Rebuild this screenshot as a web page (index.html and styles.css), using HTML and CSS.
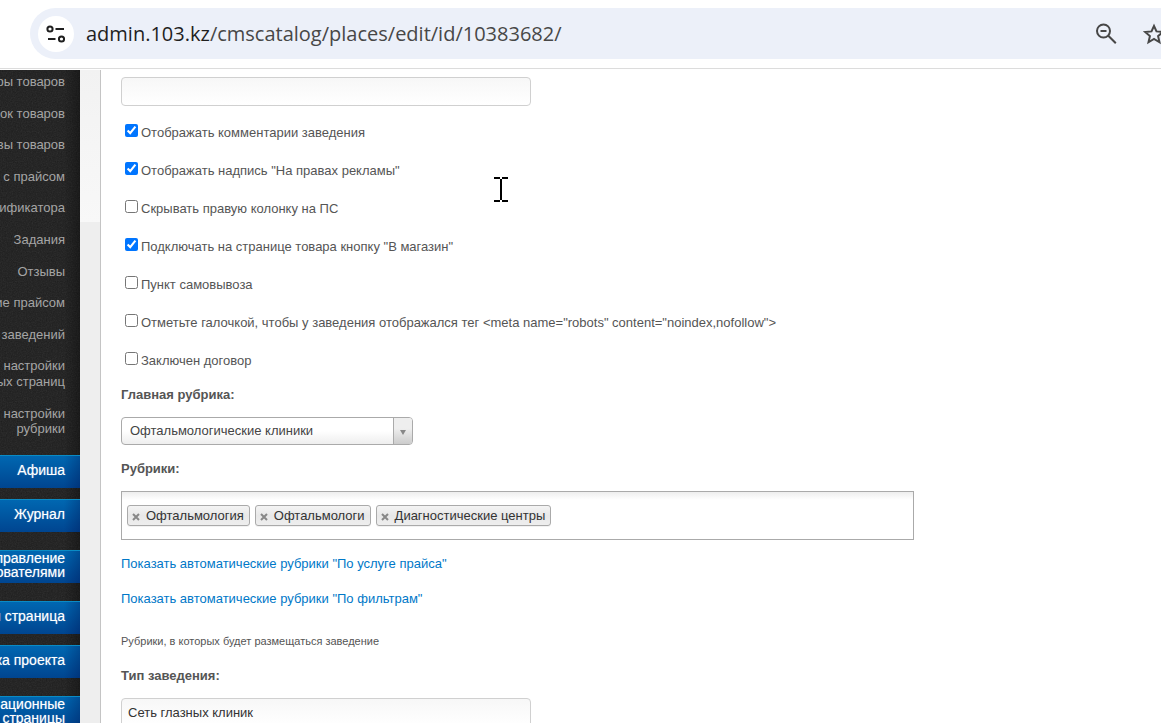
FILE: index.html
```html
<!DOCTYPE html>
<html lang="ru">
<head>
    <meta charset="UTF-8">
    <meta name="viewport" content="width=device-width, initial-scale=1.0">
    <title>Редактирование заведения</title>
    <link rel="stylesheet" href="styles.css">
</head>
<body>

    <header class="toolbar">
        <div class="address-bar">
            <button type="button" class="site-info" aria-label="Сведения о сайте">
                <svg width="20" height="20" viewBox="0 0 20 20" fill="none" stroke="#1f1f1f" stroke-width="2">
                    <circle cx="4" cy="5" r="2.6"/>
                    <path d="M9.5 5H18M2 15H9.5"/>
                    <circle cx="15.5" cy="15" r="2.6"/>
                </svg>
            </button>
            <div class="url"><span class="host">admin.103.kz</span>/cmscatalog/places/edit/id/10383682/</div>
            <button type="button" class="bar-icon" aria-label="Масштаб">
                <svg width="24" height="24" viewBox="0 0 24 24" fill="none" stroke="#474747" stroke-width="2">
                    <circle cx="9.5" cy="9" r="6.5"/>
                    <path d="M14.3 13.8L21.8 21.3M6.5 9H12.5"/>
                </svg>
            </button>
            <button type="button" class="bar-icon" aria-label="Добавить в закладки">
                <svg width="24" height="24" viewBox="0 0 24 24" fill="none" stroke="#474747" stroke-width="2">
                    <path d="M12 4L14.500 9.400L20.800 10L16.100 14.100L17.500 20.300L12 17L6.500 20.300L7.900 14.100L3.200 10L9.500 9.400Z"/>
                </svg>
            </button>
        </div>
    </header>

    <div class="page">
        <aside class="sidebar">
            <ul class="submenu">
                <li><a href="#">ры товаров</a></li>
                <li><a href="#">ок товаров</a></li>
                <li><a href="#">вы товаров</a></li>
                <li><a href="#">с прайсом</a></li>
                <li><a href="#">ификатора</a></li>
                <li><a href="#">Задания</a></li>
                <li><a href="#">Отзывы</a></li>
                <li><a href="#">ие прайсом</a></li>
                <li><a href="#">заведений</a></li>
                <li><a href="#">настройки<br>ых страниц</a></li>
                <li><a href="#">настройки<br>рубрики</a></li>
            </ul>
            <ul class="menu">
                <li><a href="#">Афиша</a></li>
                <li><a href="#">Журнал</a></li>
                <li class="double"><a href="#">правление<br>ователями</a></li>
                <li><a href="#">я страница</a></li>
                <li><a href="#">ка проекта</a></li>
                <li class="double"><a href="#">ационные<br>страницы</a></li>
            </ul>
        </aside>

        <main class="content">
            <form class="place-form">
                <input type="text" class="text-input" aria-label="Значение">

                <div class="checks">
                    <label><input type="checkbox" checked>Отображать комментарии заведения</label>
                    <label><input type="checkbox" checked>Отображать надпись "На правах рекламы"</label>
                    <label><input type="checkbox">Скрывать правую колонку на ПС</label>
                    <label><input type="checkbox" checked>Подключать на странице товара кнопку "В магазин"</label>
                    <label><input type="checkbox">Пункт самовывоза</label>
                    <label><input type="checkbox">Отметьте галочкой, чтобы у заведения отображался тег &lt;meta name="robots" content="noindex,nofollow"&gt;</label>
                    <label><input type="checkbox">Заключен договор</label>
                </div>

                <label class="field-label" for="main-rubric">Главная рубрика:</label>
                <div class="select-wrap">
                    <select id="main-rubric" class="select">
                        <option>Офтальмологические клиники</option>
                    </select>
                    <span class="select-arrow"></span>
                </div>

                <div class="field-label" id="rubrics-label">Рубрики:</div>
                <ul class="tags" aria-labelledby="rubrics-label">
                    <li class="tag"><button type="button" aria-label="Удалить"><svg width="8" height="8" viewBox="0 0 8 8"><path d="M1 1L7 7M7 1L1 7"/></svg></button>Офтальмология</li>
                    <li class="tag"><button type="button" aria-label="Удалить"><svg width="8" height="8" viewBox="0 0 8 8"><path d="M1 1L7 7M7 1L1 7"/></svg></button>Офтальмологи</li>
                    <li class="tag"><button type="button" aria-label="Удалить"><svg width="8" height="8" viewBox="0 0 8 8"><path d="M1 1L7 7M7 1L1 7"/></svg></button>Диагностические центры</li>
                </ul>

                <a class="toggle-link" href="#">Показать автоматические рубрики "По услуге прайса"</a>
                <a class="toggle-link" href="#">Показать автоматические рубрики "По фильтрам"</a>
                <p class="hint">Рубрики, в которых будет размещаться заведение</p>

                <label class="field-label" for="place-type">Тип заведения:</label>
                <input type="text" id="place-type" class="text-input" value="Сеть глазных клиник">
            </form>
        </main>
    </div>

    <svg class="cursor" width="14" height="25" viewBox="0 0 14 25" fill="none" stroke="#000" stroke-width="2">
        <path d="M0 1H6M8 1H14M7 2V23M0 24H6M8 24H14"/>
    </svg>

</body>
</html>
```
FILE: styles.css
```css
* {
    box-sizing: border-box;
}

body {
    margin: 0;
    height: 100vh;
    display: flex;
    flex-direction: column;
    overflow: hidden;
    background: #fff;
    color: #555;
    font-family: "Liberation Sans", Arial, sans-serif;
    font-size: 13px;
    line-height: 16px;
}

ul {
    list-style: none;
    margin: 0;
    padding: 0;
}

a {
    text-decoration: none;
}

button {
    padding: 0;
    border: none;
    background: none;
}

/* browser bar */
.toolbar {
    flex: none;
    padding: 8px 0 9px 30px;
    border-bottom: 1px solid #dcdcdc;
    margin-bottom: 1px;
}

.address-bar {
    display: flex;
    align-items: center;
    height: 51px;
    padding-left: 8px;
    background: #ecf0f9;
    border-radius: 26px 0 0 26px;
    overflow: hidden;
}

.site-info {
    display: flex;
    align-items: center;
    justify-content: center;
    flex: none;
    width: 36px;
    height: 36px;
    border-radius: 50%;
    background: #fff;
}

.url {
    flex: 1;
    margin-left: 12px;
    color: #474747;
    font-family: "Open Sans", "Noto Sans", sans-serif;
    font-size: 20px;
    line-height: 28px;
    white-space: nowrap;
}

.host {
    color: #1f1f1f;
}

.bar-icon {
    flex: none;
    width: 24px;
    height: 24px;
    margin-right: 24px;
}

.bar-icon:last-child {
    margin-right: -5px;
}

.bar-icon svg {
    display: block;
}

.page {
    flex: 1;
    min-height: 0;
    display: flex;
    overflow: hidden;
    background: linear-gradient(#f2f2f2, #f8f8f8) no-repeat 0 0 / 100% 152px, #eee;
}

/* left menu */
.sidebar {
    flex: none;
    width: 80px;
    overflow: hidden;
    background-color: #1c1c1c;
    background-image:
        linear-gradient(to right, transparent 80%, rgba(0, 0, 0, 0.3)),
        url("data:image/svg+xml,%3Csvg xmlns='http://www.w3.org/2000/svg' width='120' height='120'%3E%3Cfilter id='n'%3E%3CfeTurbulence type='fractalNoise' baseFrequency='.8' numOctaves='2'/%3E%3CfeColorMatrix type='saturate' values='0'/%3E%3C/filter%3E%3Crect width='120' height='120' filter='url(%23n)' opacity='.12'/%3E%3C/svg%3E");
}

.sidebar li a {
    display: flex;
    justify-content: flex-end;
    padding-right: 15px;
    text-align: right;
    white-space: nowrap;
}

/* the list is scrolled a little under the browser bar */
.submenu {
    margin-top: -4px;
    margin-bottom: 10px;
}

.submenu a {
    padding-top: 8px;
    padding-bottom: 8px;
    color: #a5a5a5;
    line-height: 1.2;
}

.menu li {
    margin: 11px 0;
}

.menu li:first-child {
    margin-top: 0;
}

.menu li.double {
    margin: 18px 0;
}

.menu a {
    align-items: center;
    height: 33px;
    padding-bottom: 3px;
    color: #fff;
    font-size: 14px;
    line-height: 14px;
    text-shadow: 0 0 1px rgba(255, 255, 255, 0.5);
    border-top: 1px solid #0a8bc4;
    background: linear-gradient(to right, transparent 80%, rgba(0, 0, 60, 0.25)), linear-gradient(#0067b1, #004590);
}

/* form */
.content {
    flex: 1;
    min-width: 0;
    margin-left: 20px;
    padding: 7px 20px 0;
    border-left: 1px solid #c4c4c4;
    background: #fff;
}

.text-input {
    display: block;
    width: 100%;
    max-width: 410px;
    height: 29px;
    padding: 0 6px;
    border: 1px solid #d0d0d0;
    border-radius: 4px;
    background: linear-gradient(#f7f7f7, #fff);
    color: #333;
    font: inherit;
}

.checks {
    margin: 7px 0 8px;
}

.checks label {
    display: block;
    width: fit-content;
    padding: 11px 0 10px;
}

.checks input {
    width: 13px;
    height: 13px;
    margin: 0 3px 0 4px;
    vertical-align: baseline;
}

.field-label {
    display: block;
    margin-bottom: 14px;
    font-weight: bold;
}

.select-wrap {
    position: relative;
    max-width: 292px;
    margin-bottom: 16px;
}

.select {
    display: block;
    width: 100%;
    height: 28px;
    padding: 0 28px 0 8px;
    appearance: none;
    border: 1px solid #aaa;
    border-radius: 4px;
    background: linear-gradient(#fff 50%, #eee);
    color: #444;
    font: inherit;
}

.select-arrow {
    position: absolute;
    top: 1px;
    right: 1px;
    bottom: 1px;
    width: 19px;
    display: flex;
    align-items: center;
    justify-content: center;
    border-left: 1px solid #aaa;
    border-radius: 0 3px 3px 0;
    background: linear-gradient(#eee 40%, #ccc);
    pointer-events: none;
}

.select-arrow::after {
    content: "";
    margin-top: 3px;
    border: 3px solid transparent;
    border-top: 5px solid #888;
    border-bottom: 0;
}

.tags {
    display: flex;
    align-items: center;
    gap: 5px;
    max-width: 793px;
    height: 49px;
    margin-bottom: 16px;
    padding: 0 5px;
    border: 1px solid #aaa;
    background: linear-gradient(#eee, #fff 8px);
}

.tag {
    display: flex;
    align-items: center;
    height: 21px;
    padding: 0 5px 0 4px;
    border: 1px solid #aaa;
    border-radius: 3px;
    background: linear-gradient(#f4f4f4, #e8e8e8 50%, #eee);
    box-shadow: 0 1px 0 rgba(0, 0, 0, 0.05);
    color: #333;
    white-space: nowrap;
}

.tag button {
    width: 8px;
    height: 8px;
    margin: 3px 6px 0 0;
}

.tag svg {
    display: block;
    stroke: #888;
    stroke-width: 2;
}

.toggle-link {
    display: block;
    width: fit-content;
    margin-bottom: 19px;
    color: #0078c8;
}

.hint {
    margin: 26px 0 19px;
    font-size: 11px;
}

/* text pointer over the form */
.cursor {
    position: absolute;
    left: 494px;
    top: 177px;
    pointer-events: none;
}
```
